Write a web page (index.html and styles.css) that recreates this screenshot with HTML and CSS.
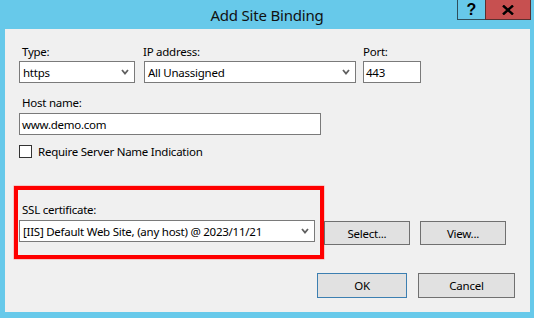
FILE: index.html
```html
<!DOCTYPE html>
<html>
<head>
<meta charset="utf-8">
<link rel="stylesheet" href="styles.css">
</head>
<body>
<div class="window">
  <div class="titlebar">
    <span class="title">Add Site Binding</span>
    <div class="caption-btns">
      <div class="cap help">?</div>
      <div class="cap close">
        <svg width="12" height="10" viewBox="0 0 12 10"><path d="M1 0.5 L11 9.5 M11 0.5 L1 9.5" stroke="#000" stroke-width="2.4" fill="none"/></svg>
      </div>
    </div>
  </div>
  <div class="client">
    <div class="row1">
      <div class="field-col">
        <label class="lbl lbl-type">Type:</label>
        <div class="select w-type"><span>https</span><svg class="chev" width="8" height="6" viewBox="0 0 8 6"><path d="M1 1 L4 4.5 L7 1" stroke="#606060" stroke-width="1.8" fill="none"/></svg></div>
      </div>
      <div class="field-col">
        <label class="lbl lbl-ip">IP address:</label>
        <div class="select w-ip"><span>All Unassigned</span><svg class="chev" width="8" height="6" viewBox="0 0 8 6"><path d="M1 1 L4 4.5 L7 1" stroke="#606060" stroke-width="1.8" fill="none"/></svg></div>
      </div>
      <div class="field-col">
        <label class="lbl lbl-port">Port:</label>
        <div class="input w-port">443</div>
      </div>
    </div>
    <div class="host">
      <label class="lbl lbl-type">Host name:</label>
      <div class="input w-host">www.demo.com</div>
    </div>
    <div class="check-row">
      <span class="checkbox"></span>
      <span class="check-label">Require Server Name Indication</span>
    </div>
    <div class="ssl-row">
      <div class="redbox">
        <label class="lbl lbl-ssl">SSL certificate:</label>
        <div class="select w-ssl"><span>[IIS] Default Web Site, (any host) @ 2023/11/21</span><svg class="chev" width="8" height="6" viewBox="0 0 8 6"><path d="M1 1 L4 4.5 L7 1" stroke="#606060" stroke-width="1.8" fill="none"/></svg></div>
      </div>
      <div class="btn btn-select">Select...</div>
      <div class="btn btn-view">View...</div>
    </div>
    <div class="bottom-row">
      <div class="btn btn-ok">OK</div>
      <div class="btn btn-cancel">Cancel</div>
    </div>
  </div>
</div>
</body>
</html>
```
FILE: styles.css
```css
* { box-sizing: border-box; }
html, body { margin: 0; padding: 0; }
body {
  font-family: "Noto Sans", "Open Sans", sans-serif;
  font-size: 11.5px;
  letter-spacing: -0.25px;
  color: #000;
  background: #67c9ea;
}
.window {
  width: 534px;
  height: 318px;
  background: #67c9ea;
  overflow: hidden;
}
.titlebar {
  position: relative;
  height: 29px;
  display: flex;
  justify-content: center;
  align-items: center;
}
.title {
  font-size: 15px;
  color: #111;
  letter-spacing: -0.2px;
  padding-top: 1px;
}
.caption-btns {
  position: absolute;
  top: 0;
  right: 3px;
  display: flex;
}
.cap {
  height: 20px;
  display: flex;
  align-items: center;
  justify-content: center;
  border: 1px solid #2f4f5c;
  border-top: none;
}
.help {
  width: 28px;
  font-weight: bold;
  font-size: 16px;
  letter-spacing: 0;
  font-family: "Liberation Sans", sans-serif;
  border-right: none;
}
.close {
  width: 46px;
  background: #c75050;
  border-color: #5a3030;
}
.client {
  margin: 0 4px 0 5px;
  height: 283px;
  background: #f0f0f0;
  padding: 15px 15px 0 14px;
}
.lbl {
  display: block;
  height: 15px;
  line-height: 15px;
  margin-bottom: 2px;
  white-space: nowrap;
}
.lbl-type { padding-left: 3px; }
.lbl-ip { margin-left: -1px; }
.row1 {
  display: flex;
}
.row1 .field-col:nth-child(2) { margin-left: 9px; }
.row1 .field-col:nth-child(3) { margin-left: 7px; }
.select, .input {
  height: 22px;
  background: #fff;
  border: 1px solid #7a7a7a;
  display: flex;
  align-items: center;
  padding-left: 3px;
  white-space: nowrap;
}
.select { justify-content: space-between; padding-right: 5px; }
.chev { flex: none; }
.w-type { width: 116px; }
.w-ip { width: 212px; }
.w-port { width: 58px; padding-left: 2px; }
.host { margin-top: 12px; }
.host .lbl { margin-bottom: 3px; }
.w-host { width: 302px; padding-left: 2px; }
.check-row {
  margin-top: 10px;
  display: flex;
  align-items: center;
  height: 13px;
}
.checkbox {
  width: 13px;
  height: 13px;
  background: #fff;
  border: 1px solid #333;
  flex: none;
}
.check-label { margin-left: 6px; }
.ssl-row {
  margin-top: 28px;
  margin-left: -5px;
  display: flex;
  align-items: flex-start;
}
.redbox {
  width: 310px;
  border: 4px solid #ff0000;
  padding: 12px 5px 13px 1px;
  box-shadow: 0 0 0 0.5px rgba(255,80,80,0.5);
}
.lbl-ssl { padding-left: 3px; margin-bottom: 3px; }
.w-ssl { width: 296px; }
.btn {
  height: 24px;
  background: #e1e1e1;
  border: 1px solid #707070;
  display: flex;
  align-items: center;
  justify-content: center;
}
.btn-select { width: 86px; margin-top: 35px; }
.btn-view { width: 86px; margin-top: 35px; margin-left: 10px; }
.bottom-row {
  margin-top: 14px;
  display: flex;
  justify-content: flex-end;
}
.btn-ok { width: 90px; height: 25px; border-color: #3c7fb1; }
.btn-cancel { width: 97px; height: 25px; margin-left: 11px; }
```
